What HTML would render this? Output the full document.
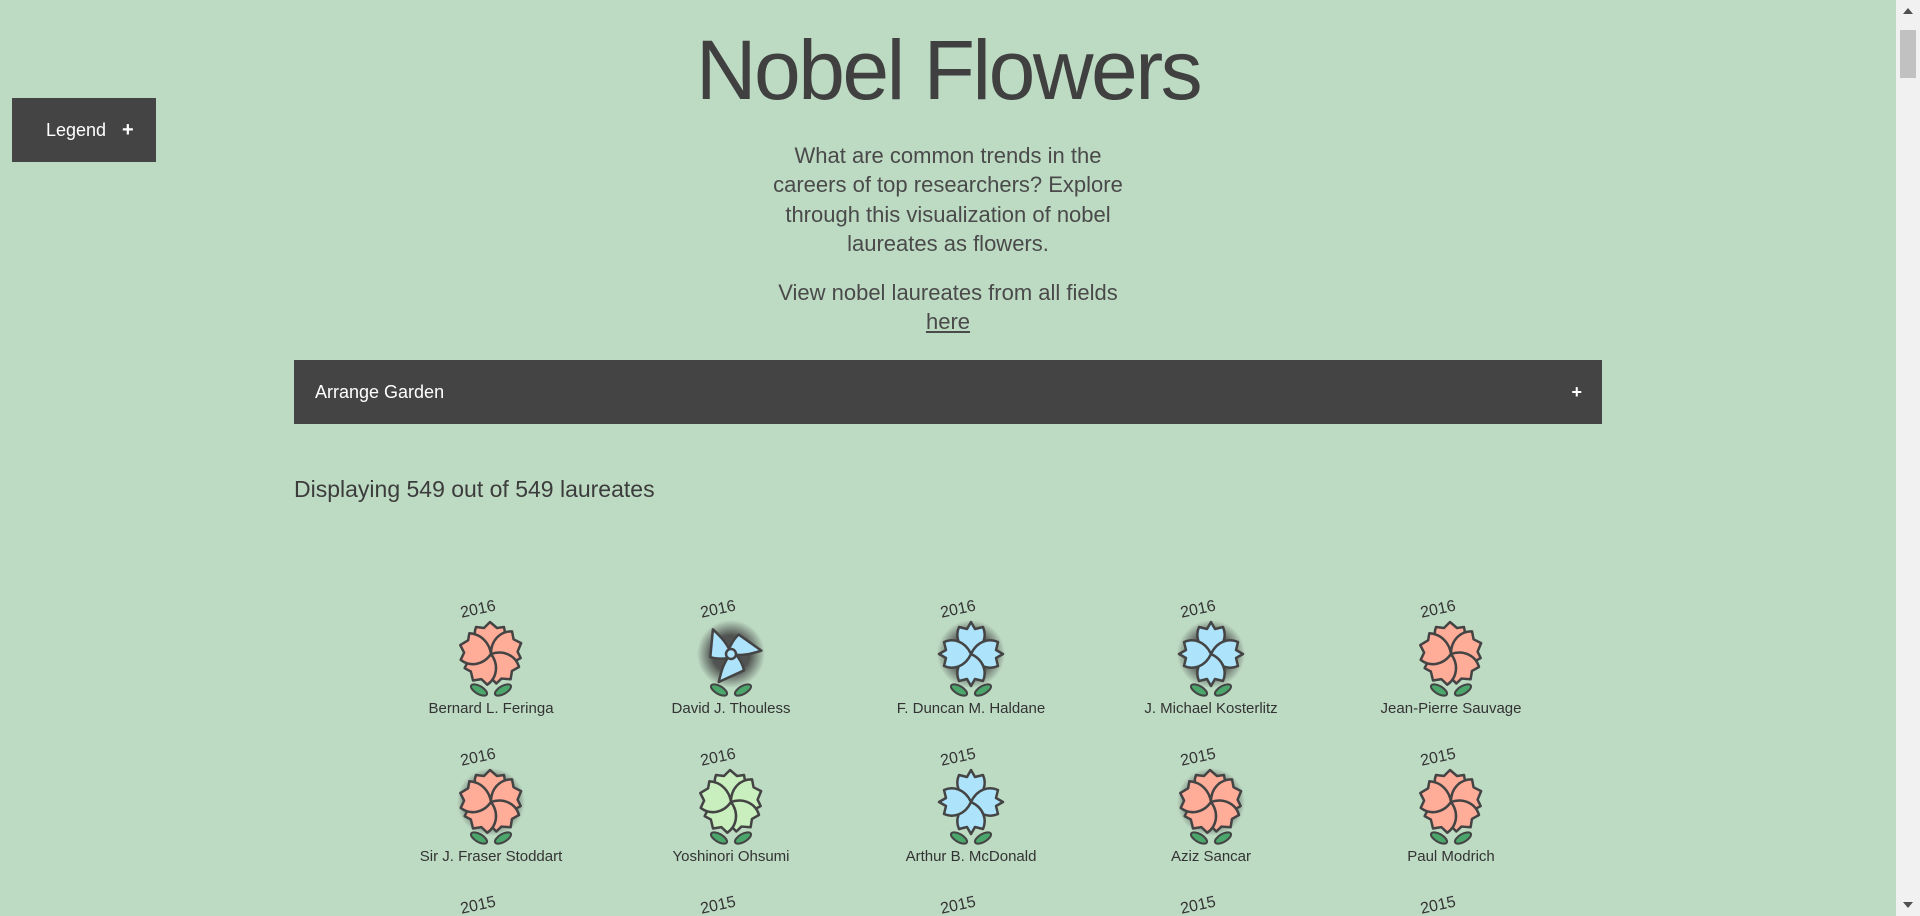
<!DOCTYPE html>
<html><head><meta charset="utf-8"><style>
html,body{margin:0;padding:0;}
body{width:1920px;height:916px;overflow:hidden;background:#bddac3;font-family:"Liberation Sans",sans-serif;color:#444;position:relative;}
.sb{position:absolute;right:0;top:0;width:24px;height:916px;background:#f1f1f1;}
.sb .th{position:absolute;left:4px;top:30px;width:16px;height:48px;background:#c1c1c1;}
.sb .up{position:absolute;left:7px;top:8px;width:0;height:0;border-left:5px solid transparent;border-right:5px solid transparent;border-bottom:6px solid #505050;}
.sb .dn{position:absolute;left:7px;bottom:8px;width:0;height:0;border-left:5px solid transparent;border-right:5px solid transparent;border-top:6px solid #505050;}
h1{position:absolute;left:0;width:1896px;top:20px;margin:0;text-align:center;font-weight:normal;font-size:84px;line-height:100px;color:#404040;letter-spacing:-2.5px;}
.legend{position:absolute;left:12px;top:98px;width:144px;height:64px;background:#444;color:#fff;font-size:18px;line-height:64px;}
.legend span{position:absolute;left:34px;}
.legend b{position:absolute;left:110px;font-size:20px;}
.p{position:absolute;left:748px;width:400px;text-align:center;font-size:22px;line-height:29.4px;color:#4a4a4a;}
.bar{position:absolute;left:294px;top:360px;width:1308px;height:64px;background:#444;color:#fff;font-size:18px;line-height:64px;}
.bar span{position:absolute;left:21px;}
.bar b{position:absolute;right:20px;font-size:18px;}
.disp{position:absolute;left:294px;top:476px;font-size:23px;color:#3c3c3c;}
svg.g{position:absolute;left:0;top:0;}
</style></head><body>
<h1>Nobel Flowers</h1>
<div class="legend"><span>Legend</span><b>+</b></div>
<div class="p" style="top:141px">What are common trends in the<br>careers of top researchers? Explore<br>through this visualization of nobel<br>laureates as flowers.</div>
<div class="p" style="top:278px">View nobel laureates from all fields<br><u>here</u></div>
<div class="bar"><span>Arrange Garden</span><b>+</b></div>
<div class="disp">Displaying 549 out of 549 laureates</div>
<svg class="g" width="1896" height="916" viewBox="0 0 1896 916">
<defs>
<radialGradient id="gl"><stop offset="0.55" stop-color="#444" stop-opacity="0.9"/><stop offset="1" stop-color="#444" stop-opacity="0"/></radialGradient>
<path id="pt" d="M0,0 C-13,-4 -19,-16 -15,-27 L-7,-26 L-1,-32 L6,-26 L13,-27 C16,-15 10,-5 0,0 Z" stroke="#444" stroke-width="2.5" stroke-linejoin="round"/>
<path id="pt4" d="M0,0 C-13,-6 -16,-18 -12,-27 L-4,-25 L0,-32 L4,-25 L12,-27 C16,-18 13,-6 0,0 Z" stroke="#444" stroke-width="2.5" stroke-linejoin="round"/>
<path id="kite" d="M0,4 C-8,2 -16,-2 -20,-6 L-6,-30 C-2,-20 2,-10 0,4 Z" stroke="#444" stroke-width="2.5" stroke-linejoin="round"/>
<g id="leaves"><ellipse cx="-12" cy="36" rx="9" ry="4" transform="rotate(30 -12 36)" fill="#4aa66a" stroke="#444" stroke-width="2"/><ellipse cx="12" cy="36" rx="9" ry="4" transform="rotate(-30 12 36)" fill="#4aa66a" stroke="#444" stroke-width="2"/></g>
<g id="p5" fill="#ffad99"><use href="#pt"/><use href="#pt" transform="rotate(72)"/><use href="#pt" transform="rotate(144)"/><use href="#pt" transform="rotate(216)"/><use href="#pt" transform="rotate(288)"/></g>
<g id="g5" fill="#c9efbe"><use href="#pt"/><use href="#pt" transform="rotate(72)"/><use href="#pt" transform="rotate(144)"/><use href="#pt" transform="rotate(216)"/><use href="#pt" transform="rotate(288)"/></g>
<g id="b4" fill="#ade3fb"><use href="#pt4"/><use href="#pt4" transform="rotate(90)"/><use href="#pt4" transform="rotate(180)"/><use href="#pt4" transform="rotate(270)"/></g>
<g id="b3" fill="#ade3fb"><use href="#kite" transform="rotate(-25)"/><use href="#kite" transform="rotate(95)"/><use href="#kite" transform="rotate(215)"/><circle cx="0" cy="0" r="5" fill="#ade3fb" stroke="#444" stroke-width="2.5"/></g>
<circle id="glow" r="34" fill="url(#gl)"/>
</defs>
<g font-family="Liberation Sans, sans-serif" fill="#333">
<g transform="translate(491,654)"><use href="#leaves"/><use href="#p5"/><text font-size="16" text-anchor="middle" transform="translate(-12,-40) rotate(-12)">2016</text><text y="59" font-size="15" text-anchor="middle">Bernard L. Feringa</text></g>
<g transform="translate(731,654)"><use href="#glow"/><use href="#leaves"/><use href="#b3"/><text font-size="16" text-anchor="middle" transform="translate(-12,-40) rotate(-12)">2016</text><text y="59" font-size="15" text-anchor="middle">David J. Thouless</text></g>
<g transform="translate(971,654)"><use href="#glow"/><use href="#leaves"/><use href="#b4"/><text font-size="16" text-anchor="middle" transform="translate(-12,-40) rotate(-12)">2016</text><text y="59" font-size="15" text-anchor="middle">F. Duncan M. Haldane</text></g>
<g transform="translate(1211,654)"><use href="#glow"/><use href="#leaves"/><use href="#b4"/><text font-size="16" text-anchor="middle" transform="translate(-12,-40) rotate(-12)">2016</text><text y="59" font-size="15" text-anchor="middle">J. Michael Kosterlitz</text></g>
<g transform="translate(1451,654)"><use href="#leaves"/><use href="#p5"/><text font-size="16" text-anchor="middle" transform="translate(-12,-40) rotate(-12)">2016</text><text y="59" font-size="15" text-anchor="middle">Jean-Pierre Sauvage</text></g>
<g transform="translate(491,802)"><use href="#glow"/><use href="#leaves"/><use href="#p5"/><text font-size="16" text-anchor="middle" transform="translate(-12,-40) rotate(-12)">2016</text><text y="59" font-size="15" text-anchor="middle">Sir J. Fraser Stoddart</text></g>
<g transform="translate(731,802)"><use href="#leaves"/><use href="#g5"/><text font-size="16" text-anchor="middle" transform="translate(-12,-40) rotate(-12)">2016</text><text y="59" font-size="15" text-anchor="middle">Yoshinori Ohsumi</text></g>
<g transform="translate(971,802)"><use href="#leaves"/><use href="#b4"/><text font-size="16" text-anchor="middle" transform="translate(-12,-40) rotate(-12)">2015</text><text y="59" font-size="15" text-anchor="middle">Arthur B. McDonald</text></g>
<g transform="translate(1211,802)"><use href="#glow"/><use href="#leaves"/><use href="#p5"/><text font-size="16" text-anchor="middle" transform="translate(-12,-40) rotate(-12)">2015</text><text y="59" font-size="15" text-anchor="middle">Aziz Sancar</text></g>
<g transform="translate(1451,802)"><use href="#leaves"/><use href="#p5"/><text font-size="16" text-anchor="middle" transform="translate(-12,-40) rotate(-12)">2015</text><text y="59" font-size="15" text-anchor="middle">Paul Modrich</text></g>
<g transform="translate(491,950)"><text font-size="16" text-anchor="middle" transform="translate(-12,-40) rotate(-12)">2015</text></g>
<g transform="translate(731,950)"><text font-size="16" text-anchor="middle" transform="translate(-12,-40) rotate(-12)">2015</text></g>
<g transform="translate(971,950)"><text font-size="16" text-anchor="middle" transform="translate(-12,-40) rotate(-12)">2015</text></g>
<g transform="translate(1211,950)"><text font-size="16" text-anchor="middle" transform="translate(-12,-40) rotate(-12)">2015</text></g>
<g transform="translate(1451,950)"><text font-size="16" text-anchor="middle" transform="translate(-12,-40) rotate(-12)">2015</text></g>
</g>
</svg>
<div class="sb"><div class="up"></div><div class="th"></div><div class="dn"></div></div>
</body></html>
